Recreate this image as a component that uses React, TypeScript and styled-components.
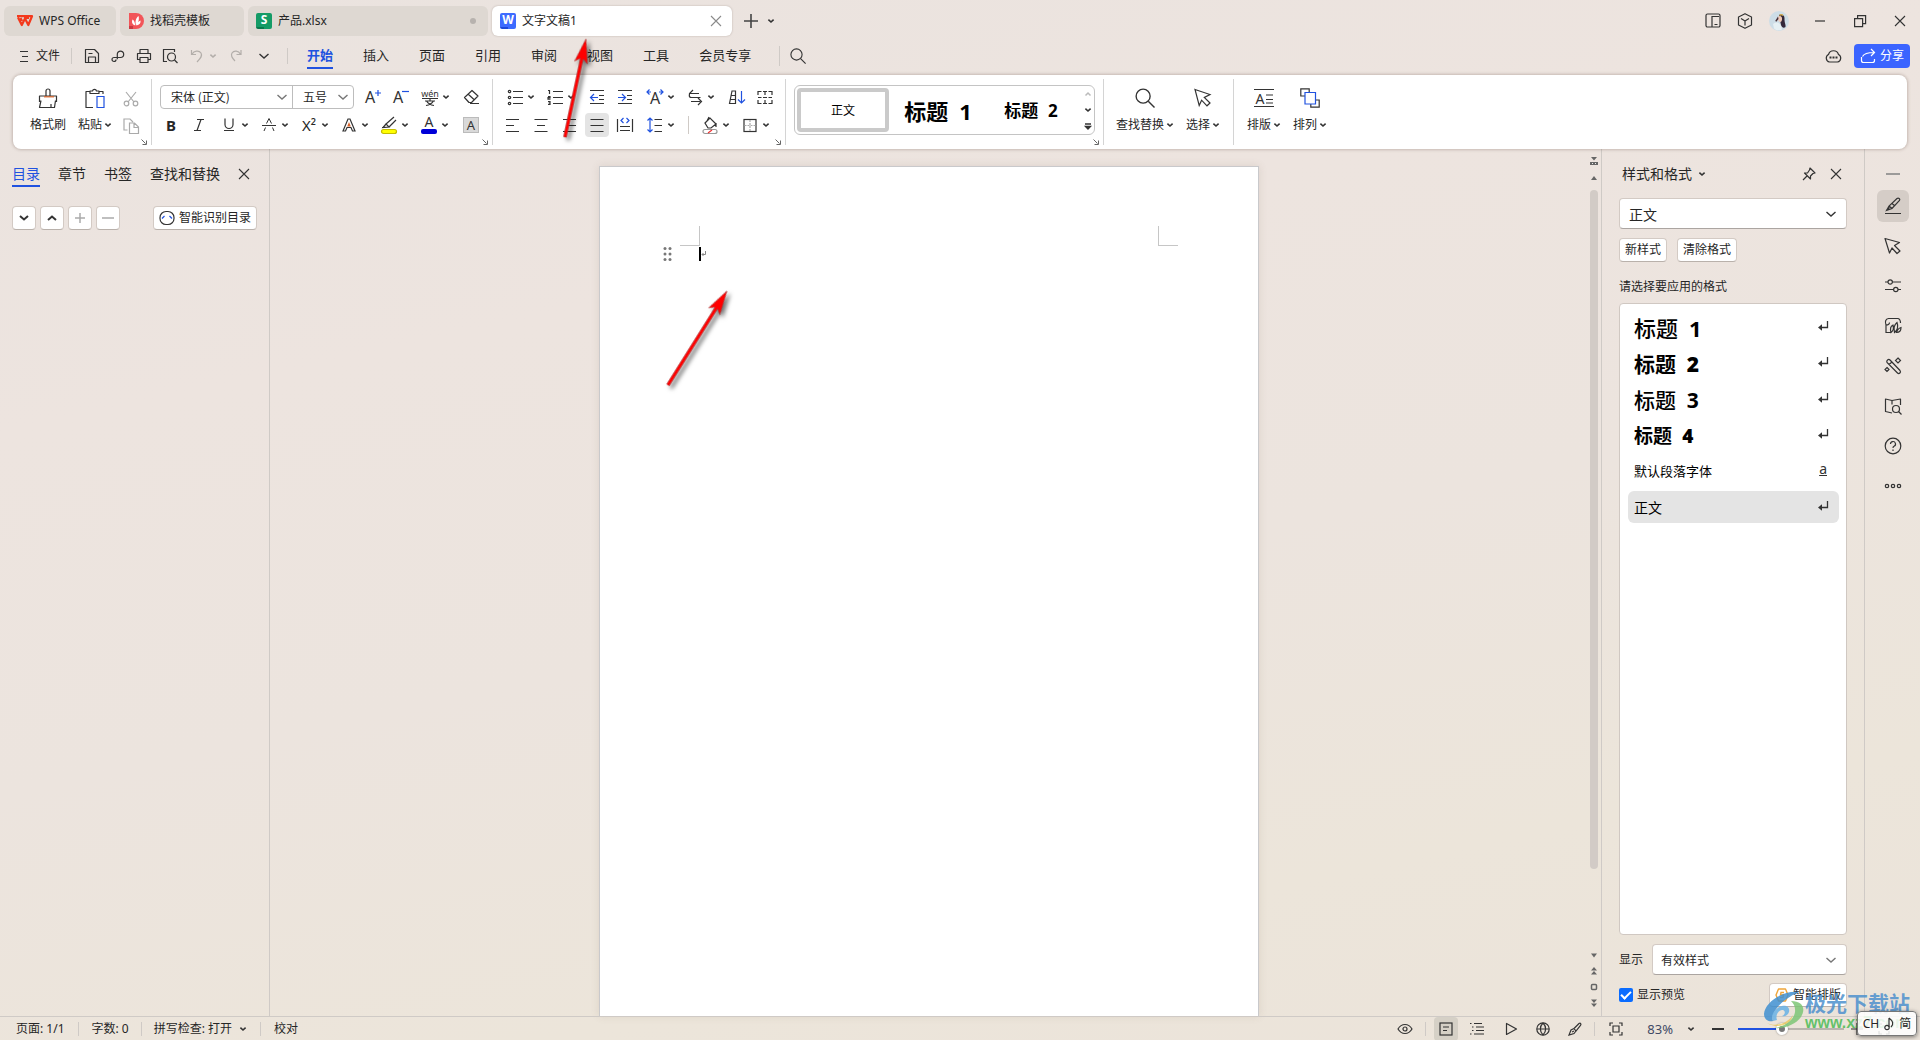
import React from 'react';
import styled, { createGlobalStyle, css } from 'styled-components';

const ui = '"Noto Sans", "Noto Sans CJK SC", sans-serif';
const cjk = '"Noto Sans CJK SC", "Noto Sans", sans-serif';
const ink = '#333333';
const blue = '#2052e0';
const line = '#cfcac6';

const Global = createGlobalStyle`
  * { box-sizing: border-box; }
  body { margin: 0; font-family: ${ui}; font-size: 12px; line-height: 20px; color: #262626; }
  button, select, input { font: inherit; color: inherit; margin: 0; }
  button { border: 0; background: none; padding: 0; cursor: pointer; white-space: nowrap; }
  svg { display: block; flex: none; overflow: visible; }
`;

/* ---------- icon helpers ---------- */

type SvgProps = { w?: number; h?: number; c?: string; s?: number; children: React.ReactNode };
const Svg = ({ w = 20, h = 20, c = ink, s = 1.2, children }: SvgProps) => (
  <svg width={w} height={h} viewBox={`0 0 ${w} ${h}`} fill="none" stroke={c} strokeWidth={s} aria-hidden="true">
    {children}
  </svg>
);
const Caret = ({ c = ink }: { c?: string }) => (
  <Svg w={8} h={8} c={c} s={1.6}><path d="M1.4 2.6 4 5l2.6-2.4" /></Svg>
);
const Chevron = ({ c = ink }: { c?: string }) => (
  <Svg w={12} h={12} c={c} s={1.4}><path d="M1.5 4 6 8l4.5-4" /></Svg>
);
const Cross = ({ c = ink }: { c?: string }) => (
  <Svg w={12} h={12} c={c} s={1.1}><path d="M1 1l10 10M11 1 1 11" /></Svg>
);
const Letter = ({ x, y, size, children }: { x: number; y: number; size: number; children: string }) => (
  <text x={x} y={y} fontSize={size} fill={ink} stroke="none" textAnchor="middle" fontFamily={ui}>{children}</text>
);
const PointerIcon = () => (
  <Svg><path d="M2 1.5 17 6.5 11.3 9.5 17 15 14 17.800 8.600 12.200 6.200 17.500z" /></Svg>
);
const SearchIcon = ({ size = 16 }: { size?: number }) => (
  <svg width={size} height={size} viewBox="0 0 16 16" fill="none" stroke={ink} strokeWidth="1.1" aria-hidden="true">
    <circle cx="6.5" cy="6.5" r="5.6" /><path d="m10.6 10.6 5 5" />
  </svg>
);
const ReturnIcon = () => (
  <Svg w={12} h={12} s={1.3}><path d="M10.5 0v6.500H3" /><path d="M5 3.300v6.400L1 6.500z" fill={ink} stroke="none" /></Svg>
);

/* ---------- shell ---------- */

const Shell = styled.div`
  position: relative;
  display: flex;
  flex-direction: column;
  height: 100vh;
  overflow: hidden;
  background: linear-gradient(168deg, #eae3df 0%, #ede4df 30%, #ece4de 55%, #ece5da 80%, #ebe3da 100%);
`;
const Rule = styled.span<{ $m?: number; $h?: number }>`
  width: 1px;
  height: ${p => p.$h ?? 16}px;
  margin: 0 ${p => p.$m ?? 12}px;
  background: ${line};
`;
const Spacer = styled.div`flex: 1;`;
const IconButton = styled.button<{ $w?: number }>`
  display: flex;
  align-items: center;
  justify-content: center;
  width: ${p => p.$w ?? 26}px;
  height: 24px;
`;

/* ---------- title bar ---------- */

const TitleBar = styled.header`
  display: flex;
  align-items: center;
  height: 36px;
  padding: 6px 0 0 4px;
  gap: 4px;
`;
const DocTab = styled.button<{ $w: number; $active?: boolean; $pad?: number }>`
  display: flex;
  align-items: center;
  gap: 6px;
  width: ${p => p.$w}px;
  height: 30px;
  padding: 0 ${p => (p.$active ? 10 : 12)}px 0 ${p => p.$pad ?? 8}px;
  border-radius: 6px;
  background: ${p => (p.$active ? '#fff' : '#ded8d2')};
  box-shadow: ${p => (p.$active ? '0 0 2px rgba(90, 70, 60, .35)' : 'none')};
`;
const TabText = styled.span`flex: 1; text-align: left;`;
const Dot = styled.i`width: 6px; height: 6px; border-radius: 50%; background: #b7b2ae;`;
const AppBadge = styled.span<{ $bg: string; $dark: string }>`
  width: 16px;
  height: 16px;
  border-radius: 2px;
  background: linear-gradient(90deg, ${p => p.$dark} 50%, transparent 50%) bottom / 100% 2px no-repeat, ${p => p.$bg};
  color: #fff;
  font-size: 12px;
  font-weight: 700;
  line-height: 14px;
  text-align: center;
`;
const WindowTools = styled.div`
  display: flex;
  align-items: center;
`;

/* ---------- menu bar ---------- */

const MenuBar = styled.nav`
  display: flex;
  align-items: center;
  height: 39px;
  padding: 0 10px 0 18px;
`;
const FileButton = styled.button`display: flex; align-items: center; gap: 6px;`;
const MenuTabs = styled.div`
  display: flex;
  gap: 30px;
  padding: 0 18px 0 7px;
`;
const MenuTab = styled.button<{ $active?: boolean }>`
  height: 27px;
  border-bottom: 2px solid ${p => (p.$active ? blue : 'transparent')};
  color: ${p => (p.$active ? blue : 'inherit')};
  font-size: 13px;
  font-weight: ${p => (p.$active ? 700 : 400)};
`;
const ShareButton = styled.button`
  display: flex;
  align-items: center;
  gap: 4px;
  height: 24px;
  padding: 0 6px;
  border-radius: 4px;
  background: #3b64ff;
  color: #fff;
`;

/* ---------- ribbon ---------- */

const Ribbon = styled.section`
  position: relative;
  z-index: 1;
  display: flex;
  height: 74px;
  margin: 0 13px;
  border-radius: 8px;
  background: #fff;
  box-shadow: 0 0 3px 1px rgba(110, 85, 75, .3);
`;
const Group = styled.div<{ $pad: string }>`
  position: relative;
  display: flex;
  padding: ${p => p.$pad};
  &:not(:first-child)::before {
    content: '';
    position: absolute;
    left: 0;
    top: 4px;
    bottom: 4px;
    width: 1px;
    background: #d4d4d4;
  }
`;
const Launcher = styled.button`
  position: absolute;
  right: 4px;
  bottom: 4px;
`;
const Stack = styled.div`display: flex; flex-direction: column;`;
const Row = styled.div<{ $pl?: number }>`
  display: flex;
  align-items: center;
  gap: 2px;
  height: 28px;
  padding-left: ${p => p.$pl ?? 0}px;
`;
const Cluster = styled.div`display: flex; align-items: center;`;
const ToolButton = styled.button<{ $split?: boolean; $on?: boolean }>`
  display: flex;
  align-items: center;
  width: ${p => (p.$split ? 40 : 28)}px;
  height: 24px;
  padding-left: 2px;
  ${p => p.$on && css`
    width: 24px;
    margin: 0 2px;
    padding: 0;
    border-radius: 4px;
    background: #e4e4e4;
  `}
`;
const Glyph = styled.span`
  display: flex;
  justify-content: center;
  width: 24px;
  font-size: 15px;
`;
const Tool = ({ label, split, on, children }: { label: string; split?: boolean; on?: boolean; children: React.ReactNode }) => (
  <ToolButton aria-label={label} title={label} $split={split} $on={on}>
    <Glyph>{children}</Glyph>
    {split && <Caret />}
  </ToolButton>
);
const BigTool = styled.button<{ $w: number }>`
  display: flex;
  flex-direction: column;
  align-items: center;
  gap: 7px;
  width: ${p => p.$w}px;
`;
const BigLabel = styled.span`display: flex; align-items: center; gap: 2px;`;

const SelectWrap = styled.span<{ $w?: number }>`
  position: relative;
  display: flex;
  align-items: center;
  ${p => (p.$w ? `width: ${p.$w}px;` : 'flex: 1;')}
  & > svg { position: absolute; right: 9px; pointer-events: none; }
`;
const BareSelect = styled.select<{ $size?: number; $pl?: number }>`
  appearance: none;
  width: 100%;
  height: 100%;
  border: 0;
  padding: 0 20px 0 ${p => p.$pl ?? 10}px;
  background: transparent;
  font-family: ${cjk};
  font-size: ${p => p.$size ?? 12}px;
  outline: none;
`;
const FontBox = styled.div`
  display: flex;
  width: 194px;
  height: 24px;
  margin-right: 2px;
  border: 1px solid #bdbdbd;
  border-radius: 4px;
  & > * + * { border-left: 1px solid #bdbdbd; }
  & svg { right: 4px; }
`;
const Gallery = styled.div`
  display: flex;
  align-items: center;
  width: 301px;
  height: 50px;
  padding: 0 2px;
  border: 1px solid #c4c4c4;
  border-radius: 6px;
`;
const GalleryItem = styled.button<{ $w: number; $size: number; $on?: boolean }>`
  width: ${p => p.$w}px;
  height: 44px;
  border: 4px solid ${p => (p.$on ? '#cacaca' : 'transparent')};
  border-radius: 4px;
  color: #000;
  font-family: ${cjk};
  font-size: ${p => p.$size}px;
  font-weight: ${p => (p.$on ? 400 : 700)};
`;
const Num = styled.span`padding-left: 6px; font-family: "Open Sans", sans-serif;`;
const GalleryNav = styled.div`
  display: flex;
  flex-direction: column;
  gap: 9px;
  margin-left: auto;
`;

/* ---------- workspace ---------- */

const Workspace = styled.main`
  display: flex;
  flex: 1;
  min-height: 0;
`;
const LeftPane = styled.aside`
  width: 270px;
  padding: 14px 12px 0;
  border-right: 1px solid ${line};
`;
const PaneTabs = styled.div`
  display: flex;
  align-items: flex-start;
  gap: 18px;
  height: 43px;
`;
const PaneTab = styled.button<{ $active?: boolean }>`
  height: 24px;
  border-bottom: 2px solid ${p => (p.$active ? blue : 'transparent')};
  color: ${p => (p.$active ? blue : 'inherit')};
  font-size: 14px;
`;
const PaneClose = styled.button`padding: 5px 0;`;
const PaneTools = styled.div`display: flex; gap: 4px;`;
const Chip = styled.button<{ $square?: boolean }>`
  display: flex;
  align-items: center;
  justify-content: center;
  gap: 4px;
  ${p => (p.$square ? 'width: 24px;' : 'padding: 0 5px;')}
  height: 24px;
  border: 1px solid #d3cac4;
  border-bottom-color: #b9b1ab;
  border-radius: 4px;
  background: #fff;
`;
const Canvas = styled.div`
  display: flex;
  flex: 1;
  justify-content: center;
  min-width: 0;
  padding-top: 17px;
`;
const Sheet = styled.article`
  width: 660px;
  padding-top: 59px;
  border: 1px solid #c9c9cb;
  border-bottom: 0;
  background: #fff;
  box-shadow: 0 0 8px rgba(120, 100, 80, .15);
`;
const Margins = styled.div`
  display: flex;
  justify-content: space-between;
  padding: 0 80px;
`;
const Corner = styled.i<{ $right?: boolean }>`
  width: 20px;
  height: 20px;
  border: 0 solid #c6c6c6;
  border-bottom-width: 1px;
  ${p => (p.$right ? 'border-left-width: 1px;' : 'border-right-width: 1px;')}
`;
const Paragraph = styled.div`
  display: flex;
  align-items: center;
  padding-left: 62px;
  height: 16px;
`;
const TextCursor = styled.i`width: 2px; height: 14px; margin-left: 25px; background: #000;`;
const ScrollRail = styled.div`
  display: flex;
  flex-direction: column;
  align-items: center;
  width: 15px;
  padding: 8px 0 9px;
  border-right: 1px solid ${line};
`;
const ScrollTop = styled.div`
  display: flex;
  flex-direction: column;
  gap: 9px;
  height: 33px;
`;
const ScrollTrack = styled.div`flex: 1; padding-bottom: 82px;`;
const ScrollThumb = styled.div`
  width: 8px;
  height: 100%;
  border-radius: 4px;
  background: #d2cbc6;
`;
const ScrollBottom = styled.div`display: flex; flex-direction: column; gap: 8px;`;

/* ---------- styles pane ---------- */

const StylesPane = styled.aside`
  display: flex;
  flex-direction: column;
  width: 263px;
  padding: 11px 17px 9px 17px;
  border-right: 1px solid ${line};
`;
const PaneTitle = styled.div`
  display: flex;
  align-items: center;
  gap: 6px;
  height: 28px;
  padding: 0 5px 0 3px;
  font-size: 14px;
`;
const PaneTitleTools = styled.div`display: flex; gap: 14px; margin-left: auto; align-items: center;`;
const Field = styled.div<{ $mt?: number }>`
  display: flex;
  flex: ${p => (p.$mt ? 'none' : '1')};
  height: 31px;
  margin-top: ${p => p.$mt ?? 0}px;
  border: 1px solid #d3cac4;
  border-bottom-color: #aba5a1;
  border-radius: 4px;
  background: #fff;
`;
const ButtonRow = styled.div`display: flex; gap: 10px; margin: 9px 0 15px;`;
const StyleList = styled.ul`
  display: flex;
  flex: 1;
  flex-direction: column;
  gap: 4px;
  margin: 6px 0 0;
  padding: 7px 7px 0 8px;
  border: 1px solid #d0c8c2;
  border-radius: 4px;
  background: #fff;
  list-style: none;
`;
const StyleRow = styled.button<{ $size: number; $weight: number; $on?: boolean }>`
  display: flex;
  align-items: center;
  justify-content: space-between;
  width: 100%;
  height: 32px;
  padding: 0 10px 0 6px;
  border-radius: 6px;
  background: ${p => (p.$on ? '#e4e4e4' : 'transparent')};
  color: #000;
  font-family: ${cjk};
  font-size: ${p => p.$size}px;
  font-weight: ${p => p.$weight};
`;
const CharMark = styled.span`font: 14px/16px ${ui}; text-decoration: underline; padding: 0 2px 4px 0; color: ${ink};`;
const FooterRow = styled.div<{ $mt: number }>`
  display: flex;
  align-items: center;
  gap: 9px;
  margin-top: ${p => p.$mt}px;
`;
const CheckLabel = styled.label`
  display: flex;
  align-items: center;
  gap: 4px;
  flex: 1;
`;
const CheckBox = styled.input`
  appearance: none;
  width: 14px;
  height: 14px;
  border-radius: 2px;
  background: #0a6cff;
  display: grid;
  place-items: center;
  &:checked::after {
    content: '';
    width: 8px;
    height: 4px;
    margin-top: -2px;
    border: solid #fff;
    border-width: 0 0 2px 2px;
    rotate: -45deg;
  }
`;
const SideRail = styled.aside`
  display: flex;
  flex-direction: column;
  align-items: center;
  gap: 8px;
  width: 55px;
  padding-top: 9px;
`;
const RailButton = styled.button<{ $on?: boolean; $short?: boolean }>`
  display: flex;
  align-items: center;
  justify-content: center;
  width: 32px;
  height: ${p => (p.$short ? 24 : 32)}px;
  border-radius: 6px;
  background: ${p => (p.$on ? '#d5cdc7' : 'transparent')};
`;

/* ---------- status bar ---------- */

const StatusBar = styled.footer`
  display: flex;
  align-items: center;
  height: 24px;
  padding: 0 16px;
  border-top: 1px solid ${line};
`;
const StatusButton = styled.button`display: flex; align-items: center; gap: 7px;`;
const ViewButton = styled.button<{ $w: number; $on?: boolean }>`
  display: flex;
  align-items: center;
  justify-content: center;
  width: ${p => p.$w}px;
  height: 24px;
  border-radius: 4px;
  background: ${p => (p.$on ? '#d5d0c6' : 'transparent')};
`;
const ZoomText = styled.button`
  display: flex;
  align-items: center;
  gap: 14px;
  margin: 0 11px 0 14px;
  color: #3f4a66;
  font-size: 13px;
`;
const ZoomSlider = styled.input`
  appearance: none;
  width: 106px;
  height: 12px;
  margin: 0 6px 0 8px;
  background: linear-gradient(90deg, ${blue} 42%, #b9b4ae 42%) center / 100% 2px no-repeat;
  &::-webkit-slider-thumb {
    appearance: none;
    width: 12px;
    height: 12px;
    border: 3px solid #fff;
    border-radius: 50%;
    background: #777;
    box-shadow: 0 0 2px rgba(0, 0, 0, .4);
  }
`;

/* ---------- overlays ---------- */

const Marks = styled.svg`
  position: absolute;
  left: 0;
  top: 0;
  z-index: 2;
  pointer-events: none;
`;
const Watermark = styled.div`
  position: absolute;
  right: 10px;
  bottom: 8px;
  z-index: 3;
  display: flex;
  align-items: center;
  pointer-events: none;
`;
const WatermarkName = styled.div`
  color: rgba(77, 144, 205, .85);
  font: 700 21px/24px ${cjk};
`;
const WatermarkSite = styled.div`
  color: rgba(76, 187, 86, .85);
  font: 700 16px/18px "Liberation Sans", sans-serif;
`;
const ImeBar = styled.div`
  position: absolute;
  right: 3px;
  bottom: 4px;
  z-index: 4;
  display: flex;
  align-items: center;
  justify-content: center;
  gap: 4px;
  width: 60px;
  height: 25px;
  border: 1px solid #777;
  border-radius: 4px;
  background: rgba(255, 255, 255, .85);
  box-shadow: 0 1px 4px rgba(0, 0, 0, .5);
`;

const menuTabs = ['开始', '插入', '页面', '引用', '审阅', '视图', '工具', '会员专享'];
const paneTabs = ['目录', '章节', '书签', '查找和替换'];
const styleRows = [
  { name: '标题', n: '1', size: 22, weight: 500 },
  { name: '标题', n: '2', size: 21, weight: 700 },
  { name: '标题', n: '3', size: 21, weight: 500 },
  { name: '标题', n: '4', size: 19, weight: 700 },
  { name: '默认段落字体', size: 13, weight: 400, char: true },
  { name: '正文', size: 14, weight: 400, on: true },
];

const LaunchIcon = () => <Svg w={6} h={6} c="#666" s={1}><path d="M.5.5l4 4M5.5 1.5v4h-4" /></Svg>;

const Title = () => (
  <TitleBar>
    <DocTab $w={112} $pad={12}>
      <Svg w={17} h={12} c="#f3391c" s={2.2}><path d="M1 1.200h15L12.300 10 9 3.500 5.800 10 2 2.500M4.500 3 6 6M13 3 8 3" strokeLinejoin="round" /></Svg>
      <TabText>WPS Office</TabText>
    </DocTab>
    <DocTab $w={124}>
      <Svg w={16} h={16} c="none">
        <path d="M1 0h7a8 8 0 0 1 0 16H1z" fill="#f25559" />
        <path d="M1 13h4v3H1z" fill="#c93a42" />
        <path d="M7.2 12.5C4 11.5 3.5 9 4.5 6.5 6 7.5 7 9 7.2 12.5zM8 12.5C6.8 8.5 8 5 10.5 3c.8 2.5.5 6-2.5 9.5zM8.5 12.5C9 10 10.5 8 12.5 7.5c.5 2.500-1 4.500-4 5z" fill="#fff" />
      </Svg>
      <TabText>找稻壳模板</TabText>
    </DocTab>
    <DocTab $w={240}>
      <AppBadge $bg="#149b66" $dark="#08794c">S</AppBadge>
      <TabText>产品.xlsx</TabText>
      <Dot />
    </DocTab>
    <DocTab $w={240} $active>
      <AppBadge $bg="#3d6bff" $dark="#1c48d8">W</AppBadge>
      <TabText>文字文稿1</TabText>
      <Cross c="#8a8a8a" />
    </DocTab>
    <Cluster>
      <IconButton $w={30} aria-label="新建"><Svg w={14} h={14} c="#444" s={1.6}><path d="M7 0v14M0 7h14" /></Svg></IconButton>
      <IconButton $w={10} aria-label="标签列表"><Caret /></IconButton>
    </Cluster>
    <Spacer />
    <WindowTools>
      <IconButton $w={38} aria-label="多窗口">
        <Svg w={16} h={16}><path d="M7 14H2.5A1.5 1.5 0 0 1 1 12.5v-10A1.5 1.5 0 0 1 2.5 1h11A1.5 1.5 0 0 1 15 2.5v10a1.5 1.5 0 0 1-1.5 1.500H7V3.500h7M9.500 11.500h3" /></Svg>
      </IconButton>
      <IconButton $w={26} aria-label="应用">
        <Svg w={16} h={16}><path d="M8 .7 14.500 4v8L8 15.300 1.500 12V4zM4 5.500 8 8l4-2.500M8 8v4.500" strokeLinejoin="round" /></Svg>
      </IconButton>
      <IconButton $w={42} aria-label="账户">
        <Svg w={20} h={20} c="none">
          <circle cx="10" cy="10" r="10" fill="#cddde7" />
          <path d="M10 4c4-1.500 6 1 5.500 5 0 3 1.500 4.500 1 7-2 1.500-3.500.5-4.500-2z" fill="#33283a" />
          <path d="M9 6c2-2 4.500-.5 4 2.500S11 11.500 9.500 10z" fill="#f0c9b8" />
          <path d="M6.500 9.500 9 5.500l.5 2.500-2.500 3z" fill="#4a3038" />
          <path d="M4 13c4-3 8-1.500 9 5.500-3 1.500-6 1-8-1z" fill="#e6f0f4" />
          <path d="M10.500 4.500c1-1 2.500-1 3.500 0" stroke="#d8b04a" />
        </Svg>
      </IconButton>
      <IconButton $w={40} aria-label="最小化"><Svg w={10} h={10}><path d="M0 5h10" /></Svg></IconButton>
      <IconButton $w={40} aria-label="还原"><Svg w={12} h={12}><path d="M.6 3.600h8v8h-8zM3.600 3.600v-3h8v8h-3" /></Svg></IconButton>
      <IconButton $w={40} aria-label="关闭"><Cross /></IconButton>
    </WindowTools>
  </TitleBar>
);

const Menu = () => (
  <MenuBar>
    <FileButton>
      <Svg w={12} h={12} s={1}><path d="M2 1.500h8M4 6.500h6M2 11.500h8" /></Svg>文件
    </FileButton>
    <Rule $m={11} />
    <Cluster>
      <IconButton $w={18} aria-label="保存"><Svg w={16} h={16}><path d="M1.500 1.500h9l4 4v9h-13zM4.500 14.500V9h7v5.500M4.500 5.500h4" strokeLinejoin="round" /></Svg></IconButton>
      <IconButton $w={34} aria-label="输出"><Svg w={14} h={14}><path d="M5 10.500a2 2 0 1 1-2-2h6.500a3.200 3.200 0 1 0-3.200-3.200v5" /></Svg></IconButton>
      <IconButton $w={18} aria-label="打印"><Svg w={16} h={16}><path d="M4 5.500v-4h8v4M4 11.500H1.500v-6h13v6H12M4 9.500h8v5H4z" strokeLinejoin="round" /></Svg></IconButton>
      <IconButton $w={34} aria-label="打印预览"><Svg w={16} h={16}><path d="M5 13.500H1.500v-12h11V4" /><circle cx="9.5" cy="9" r="4" /><path d="m12.500 12 3 3" /></Svg></IconButton>
      <IconButton $w={20} aria-label="撤销"><Svg w={14} h={14} c="#b3aeaa"><path d="M1.500 1v4.500H6M2 5.200C4 1.500 9 1 11 4c1.600 2.700 0 5-4 9" /></Svg></IconButton>
      <IconButton $w={12} aria-label="撤销列表"><Caret c="#b3aeaa" /></IconButton>
      <IconButton $w={34} aria-label="恢复"><Svg w={12} h={14} c="#b3aeaa"><path d="M11 1v4.500H6.500M10.500 5.200C8.500 1.500 4 1 2 4c-1.600 2.700 0 5 3 8" /></Svg></IconButton>
      <IconButton $w={22} aria-label="更多"><Chevron /></IconButton>
    </Cluster>
    <Rule />
    <MenuTabs>
      {menuTabs.map((t, i) => <MenuTab key={t} $active={i === 0}>{t}</MenuTab>)}
    </MenuTabs>
    <Rule $m={10} $h={20} />
    <button aria-label="搜索"><SearchIcon /></button>
    <Spacer />
    <IconButton $w={40} aria-label="云">
      <Svg w={17} h={14}><path d="M4.500 13a4 4 0 0 1-1-7.500 5.200 5.200 0 0 1 10 0 4 4 0 0 1-1 7.500z" /><path d="M4.500 8.500h2M7.500 8.500h2M10.500 8.500h2" strokeWidth="2" /></Svg>
    </IconButton>
    <ShareButton>
      <Svg w={16} h={16} c="#fff"><path d="M1.500 9v3.500a2 2 0 0 0 2 2h9a2 2 0 0 0 2-2V11M2.500 8.500C4 5.500 7 4.500 14 4.500M11 1l3.500 3.500L11 8" /></Svg>
      分享
    </ShareButton>
  </MenuBar>
);

const RibbonBar = () => (
  <Ribbon>
    <Group $pad="13px 8px 0 12px">
      <BigTool $w={46}>
        <Svg><path d="M8 8V3a2 2 0 0 1 4 0v5M1.500 14V8h17v6M3 12.500 1.500 19.500h15l1-7M13 16v3.500" strokeLinejoin="round" /><path d="M6 8.800h10" stroke="#d8632a" /></Svg>
        <BigLabel>格式刷</BigLabel>
      </BigTool>
      <BigTool $w={48}>
        <Svg><path d="M5 3.500H1v16h7M14 3.500h4V6M5 5.500V3h2.500C8 .8 11 .8 11.500 3H14v2.500z" strokeLinejoin="round" /><path d="M12 8.500h7v11h-7z" stroke={blue} /></Svg>
        <BigLabel>粘贴<Caret /></BigLabel>
      </BigTool>
      <Stack>
        <IconButton $w={24} aria-label="剪切"><Svg w={16} h={16} c="#aaa"><path d="M3 0l8 10M13 0 5 10" /><circle cx="3.5" cy="11.500" r="2.300" /><circle cx="12.5" cy="11.500" r="2.300" /></Svg></IconButton>
        <Row><IconButton $w={24} aria-label="复制"><Svg w={16} h={16} c="#aaa"><path d="M4.500 12H1V1h6l3 3M6.500 5h5l4 4v6.500h-9zM11 5v4.500h4" /></Svg></IconButton></Row>
      </Stack>
      <Launcher aria-label="剪贴板选项"><LaunchIcon /></Launcher>
    </Group>

    <Group $pad="8px 6px 0 6px">
      <Stack>
        <Row $pl={3}>
          <FontBox>
            <SelectWrap $w={131}><BareSelect aria-label="字体"><option>宋体 (正文)</option></BareSelect><Chevron c="#777" /></SelectWrap>
            <SelectWrap><BareSelect aria-label="字号"><option>五号</option></BareSelect><Chevron c="#777" /></SelectWrap>
          </FontBox>
          <Cluster>
            <Tool label="增大字号"><Svg><Letter x={8} y={16} size={16}>A</Letter><path d="M13 6h6M16 3v6" stroke={blue} /></Svg></Tool>
            <Tool label="减小字号"><Svg><Letter x={8} y={16} size={16}>A</Letter><path d="M12 4.500h7" stroke={blue} /></Svg></Tool>
          </Cluster>
          <Tool label="拼音指南" split><Svg><Letter x={10} y={10} size={9}>wén</Letter><path d="M2 11.500h16M5 14h10M10 12v2M6.500 14c1.500 2.500 4 4 7.500 4.500M13.500 14c-1.500 2.500-4 4-7.500 4.500" /></Svg></Tool>
          <Tool label="清除格式"><Svg><path d="M2.500 10.500 10 3.500l6 5.500-6.500 6.500H7zM6 7l6.500 6M8 16.500h9" strokeLinejoin="round" /></Svg></Tool>
        </Row>
        <Row>
          <Cluster>
            <Tool label="加粗"><b>B</b></Tool>
            <Tool label="倾斜"><Svg><path d="M8 4.500h7M5 15.500h7M12 4.500 8 15.500" /></Svg></Tool>
          </Cluster>
          <Cluster>
            <Tool label="下划线" split><Svg><path d="M6 3.500v6a4 4 0 0 0 8 0v-6M5 15.500h10" /></Svg></Tool>
            <Tool label="删除线" split><Svg s={1}><path d="M3 10.500h14M7.500 8.500 10 3.500l2.500 5M6.500 12.500 5 16M13.500 12.500 15 16" /></Svg></Tool>
            <Tool label="上标" split><span>X²</span></Tool>
            <Tool label="文字效果" split><Svg><path d="M4 16 9 4h2l5 12h-2.500L12 12.500H8L6.500 16z" /><path d="m10 7 1.800 4.500H8.200z" fill="#d8632a" stroke="none" /></Svg></Tool>
            <Tool label="突出显示" split><Svg><path d="m7 9 8-7M10 12l7-7M7 9l3 3-6 .5zM3 12.500h3" /><rect x="2.5" y="14.500" width="15" height="4" rx="2" fill="#ff0" stroke="#c5bd00" /></Svg></Tool>
            <Tool label="字体颜色" split><Svg><Letter x={10} y={12} size={14}>A</Letter><rect x="2" y="14" width="16" height="5" rx="2" fill="#0000d8" stroke="none" /></Svg></Tool>
          </Cluster>
          <Tool label="字符底纹"><Svg c="#bbb" s={1}><rect x="2.5" y="2.500" width="15" height="15" fill="#d9d9d9" /><Letter x={10} y={15} size={13}>A</Letter></Svg></Tool>
        </Row>
      </Stack>
      <Launcher aria-label="字体选项"><LaunchIcon /></Launcher>
    </Group>

    <Group $pad="8px 6px 0 7px">
      <Stack>
        <Row $pl={2}>
          <Cluster>
            <Tool label="项目符号" split><Svg><path d="M8 4.500h10M8 10.500h10M8 16.500h10" /><circle cx="4.5" cy="4.500" r="1.200" /><circle cx="4.5" cy="10.500" r="1.200" /><circle cx="4.5" cy="16.500" r="1.200" /></Svg></Tool>
            <Tool label="编号" split><Svg><path d="M8 4.500h10M8 10.500h10M8 16.500h10M3 3.500h1.500v3.500M3 9.500h2v1.200H3v1.500h2.500M3 14.500h2v3H3M3.500 16H5" /></Svg></Tool>
          </Cluster>
          <Cluster>
            <Tool label="减少缩进"><Svg><path d="M3 3.500h14M12 8.500h5M12 12.500h5M3 16.500h14" /><path d="M3.500 10.500H11M7 7l-3.500 3.500L7 14" stroke={blue} /></Svg></Tool>
            <Tool label="增加缩进"><Svg><path d="M3 3.500h14M12 8.500h5M12 12.500h5M3 16.500h14" /><path d="M3 10.500h7.500M7 7l3.500 3.500L7 14" stroke={blue} /></Svg></Tool>
          </Cluster>
          <Cluster>
            <Tool label="中文版式" split><Svg><Letter x={10} y={17} size={16}>A</Letter><path d="M6 5H2.500M4.500 2.500 2 5l2.500 2.500M14 5h3.500M15.500 2.500 18 5l-2.500 2.500" stroke={blue} /></Svg></Tool>
            <Tool label="文字方向" split><Svg><path d="M14 6.500H4.500M8 3 4.500 6.500c-.5 3 0 4 2 4h9M6 14.500h9.500M13 11l3.500 3.500L13 18" /></Svg></Tool>
          </Cluster>
          <Cluster>
            <Tool label="排序"><Svg><path d="M2.500 16.500 5 4h3.500v12.500zM4 8.500h4.500M3.500 12.500h5" /><path d="M14.500 4v12M11 12.500l3.500 3.500 3.500-3.500" stroke={blue} /></Svg></Tool>
            <Tool label="表格"><Svg><path d="M3 8V4.500h3.500M8 4.500h4M13.500 4.500H17V8M3 10.500h3.500M8 10.500h4M13.500 10.500H17M3 13v3.500h3.500M8 16.500h4M13.500 16.500H17V13M10 4.500V8M10 13v3.500" /></Svg></Tool>
          </Cluster>
        </Row>
        <Row>
          <Cluster>
            <Tool label="左对齐"><Svg><path d="M3 4.500h13M3 10.500h8M3 16.500h13" /></Svg></Tool>
            <Tool label="居中"><Svg><path d="M3.500 4.500h13M6 10.500h8M3.500 16.500h13" /></Svg></Tool>
            <Tool label="右对齐"><Svg><path d="M4 4.500h13M9 10.500h8M4 16.500h13" /></Svg></Tool>
            <Tool label="两端对齐" on><Svg><path d="M3.500 4.500h13M3.500 10.500h13M3.500 16.500h13" /></Svg></Tool>
            <Tool label="分散对齐"><Svg><path d="M2.500 4v13M17.500 4v13M5 11.500h10M5 15.500h10" /><path d="M8.500 3 6 5.500 8.500 8M11.500 3 14 5.500 11.500 8" stroke={blue} /></Svg></Tool>
          </Cluster>
          <Tool label="行距" split><Svg><path d="M9.500 4.500H17M9.500 10.500H17M9.500 16.500H17" /><path d="M5 3v14M2.500 5.500 5 3l2.500 2.500M2.500 14.500 5 17l2.500-2.500" stroke={blue} /></Svg></Tool>
          <Rule $m={5} $h={18} />
          <Cluster>
            <Tool label="底纹" split><Svg><path d="m5 8 5-5 6 6-5 4H8zM7 6l2-4M16 8v4" /><rect x="3" y="14.500" width="14" height="4" rx="2" stroke="#999" /><path d="m8 18 4-3" stroke="#e33" /></Svg></Tool>
            <Tool label="边框" split><Svg><rect x="4" y="4.500" width="12" height="12" /><path d="M10 5v11M4.500 10.500h11" stroke="#aaa" strokeDasharray="2 1" /></Svg></Tool>
          </Cluster>
        </Row>
      </Stack>
      <Launcher aria-label="段落选项"><LaunchIcon /></Launcher>
    </Group>

    <Group $pad="10px 8px 0 9px">
      <Gallery>
        <GalleryItem $w={92} $size={12} $on>正文</GalleryItem>
        <GalleryItem $w={98} $size={22}>标题 <Num>1</Num></GalleryItem>
        <GalleryItem $w={88} $size={17}>标题 <Num>2</Num></GalleryItem>
        <GalleryNav>
          <button aria-label="上一行"><Svg w={8} h={6} c="#bbb" s={1.5}><path d="M1.500 4.500 4 2l2.500 2.500" /></Svg></button>
          <button aria-label="下一行"><Caret /></button>
          <button aria-label="全部样式"><Svg w={8} h={7} s={1.3}><path d="M1 1h6M1.500 3.500 4 6l2.500-2.500z" fill={ink} /></Svg></button>
        </GalleryNav>
      </Gallery>
      <Launcher aria-label="样式选项"><LaunchIcon /></Launcher>
    </Group>

    <Group $pad="13px 7px 0 7px">
      <BigTool $w={70}><SearchIcon size={20} /><BigLabel>查找替换<Caret /></BigLabel></BigTool>
      <BigTool $w={46}><PointerIcon /><BigLabel>选择<Caret /></BigLabel></BigTool>
    </Group>
    <Group $pad="13px 8px 0 8px">
      <BigTool $w={46}><Svg><path d="M0 1.500h20M12 7h7M12 11.500h7M12 15h7M0 18.500h20" /><Letter x={6} y={15.5} size={14}>A</Letter></Svg><BigLabel>排版<Caret /></BigLabel></BigTool>
      <BigTool $w={46}><Svg><path d="M5 8H.8V.8h8.400V4M15.500 12h3.700v7.200h-8.400V16" /><path d="M5 4.500h10.500V16H5z" stroke={blue} /></Svg><BigLabel>排列<Caret /></BigLabel></BigTool>
    </Group>
  </Ribbon>
);

const Outline = () => (
  <LeftPane>
    <PaneTabs>
      {paneTabs.map((t, i) => <PaneTab key={t} $active={i === 0}>{t}</PaneTab>)}
      <PaneClose aria-label="关闭"><Cross /></PaneClose>
    </PaneTabs>
    <PaneTools>
      <Chip $square aria-label="展开"><Svg w={12} h={12} s={2}><path d="M2 4l4 3.500L10 4" /></Svg></Chip>
      <Chip $square aria-label="收起"><Svg w={12} h={12} s={2}><path d="M2 8l4-3.500L10 8" /></Svg></Chip>
      <Chip $square aria-label="增加"><Svg w={12} h={12} c="#aaa" s={1.5}><path d="M6 1v10M1 6h10" /></Svg></Chip>
      <Chip $square aria-label="减少"><Svg w={12} h={12} c="#aaa" s={1.5}><path d="M0 6h12" /></Svg></Chip>
      <Spacer />
      <Chip>
        <Svg w={16} h={16}><rect x="1" y="1.500" width="14" height="13" rx="6" /><path d="M3 8.500 5.500 6M13 8.500 10.500 6" stroke={blue} /></Svg>
        智能识别目录
      </Chip>
    </PaneTools>
  </LeftPane>
);

const Document = () => (
  <Canvas>
    <Sheet>
      <Margins><Corner /><Corner $right /></Margins>
      <Paragraph>
        <Svg w={12} h={14} c="none">
          {[1.5, 7, 12.5].map(y => [3, 8].map(x => <circle key={`${x}-${y}`} cx={x} cy={y} r="1.5" fill="#777" />))}
        </Svg>
        <TextCursor />
        <Svg w={5} h={8} c="#888" s={1}><path d="M4.500 1v3.500H1M2.500 3 1 4.500 2.500 6" /></Svg>
      </Paragraph>
    </Sheet>
  </Canvas>
);

const Scroller = () => (
  <ScrollRail>
    <ScrollTop>
      <Svg w={8} h={9} c="none"><path d="M1 0h6L4 3.500zM0 5h8v3H0z" fill="#666" /><path d="M2 6.500h1M5 6.500h1" stroke="#eee" /></Svg>
      <Svg w={8} h={6} c="none"><path d="M4 1l3 4H1z" fill="#666" /></Svg>
    </ScrollTop>
    <ScrollTrack><ScrollThumb /></ScrollTrack>
    <ScrollBottom>
      <Svg w={8} h={8} c="none"><path d="M4 6.500l3-4H1z" fill="#666" /></Svg>
      <Svg w={8} h={8} c="none"><path d="M4 0l3 3.500H1zM4 4l3 3.500H1z" fill="#666" /></Svg>
      <Svg w={8} h={8} c="#666" s={1.5}><rect x="1.5" y="1.500" width="5" height="5" rx="1" /></Svg>
      <Svg w={8} h={8} c="none"><path d="M4 4l3-3.500H1zM4 8l3-3.500H1z" fill="#666" /></Svg>
    </ScrollBottom>
  </ScrollRail>
);

const Formats = () => (
  <StylesPane>
    <PaneTitle>
      样式和格式 <Caret />
      <PaneTitleTools>
        <button aria-label="固定"><Svg w={14} h={14}><path d="M8 1l5 5-2 .5-2.500 2.500v3L2.500 6h3L7.500 3zM5 9l-4 4" strokeLinejoin="round" /></Svg></button>
        <button aria-label="关闭"><Cross /></button>
      </PaneTitleTools>
    </PaneTitle>
    <Field $mt={10}>
      <SelectWrap><BareSelect aria-label="当前样式" $size={14} $pl={9}><option>正文</option></BareSelect><Chevron /></SelectWrap>
    </Field>
    <ButtonRow><Chip>新样式</Chip><Chip>清除格式</Chip></ButtonRow>
    <span>请选择要应用的格式</span>
    <StyleList>
      {styleRows.map(r => (
        <li key={r.name + (r.n ?? '')}>
          <StyleRow $size={r.size} $weight={r.weight} $on={r.on}>
            <span>{r.name}{r.n && <> <Num><b>{r.n}</b></Num></>}</span>
            {r.char ? <CharMark>a</CharMark> : <ReturnIcon />}
          </StyleRow>
        </li>
      ))}
    </StyleList>
    <FooterRow $mt={9}>
      <label htmlFor="show-styles">显示</label>
      <Field>
        <SelectWrap><BareSelect id="show-styles" $pl={8}><option>有效样式</option></BareSelect><Chevron c="#777" /></SelectWrap>
      </Field>
    </FooterRow>
    <FooterRow $mt={8}>
      <CheckLabel><CheckBox type="checkbox" defaultChecked />显示预览</CheckLabel>
      <Chip>
        <Svg w={14} h={14} c="#efa53a" s={1.4}><path d="M3.500 1h7L13 7l-2.500 6h-7L1 7z" strokeLinejoin="round" /><path d="M9 4.500H6L5.500 7h3L8 9.500H5" /></Svg>
        智能排版
      </Chip>
    </FooterRow>
  </StylesPane>
);

const Rail = () => (
  <SideRail>
    <RailButton $short aria-label="折叠"><Svg w={14} h={24} c="#888" s={1.6}><path d="M0 16h14" /></Svg></RailButton>
    <RailButton $on aria-label="样式和格式"><Svg w={18} h={18}><path d="M1 16.500h16M2.500 13.500 5 9l8-7.500c1.500-1 3.500.5 2.500 2L8 11.500zM5 9l3 2.500M8 6.500l3 2.500M2.500 13.500l3-3" /></Svg></RailButton>
    <RailButton aria-label="选择"><Svg w={18} h={18}><path d="M1 1.500 15.500 5.500 10.500 8.500 16 14l-3 2.500-5-5.500-2.500 5z" strokeLinejoin="round" /></Svg></RailButton>
    <RailButton aria-label="设置"><Svg w={18} h={18}><path d="M1 5h3M8.500 5H17M1 12.500h8.500M14 12.500h3" /><circle cx="6.2" cy="5" r="2.200" /><circle cx="11.8" cy="12.500" r="2.200" /></Svg></RailButton>
    <RailButton aria-label="图库"><Svg w={18} h={18}><path d="M7 15.500H2V8C.5 4 2 2 4.500 1.500H14C16 2 16.500 4 16.500 6M2 8c2.500 0 3.500-1 3.500-2.500M7 15.500C6 12 7 9 9 8c1 3 0 6-2 7.500zM10.500 15.500C9.500 11 11 7 13 5.500c1.500 4 .5 7.500-2.500 10zM12.500 15.500c1-3 2.500-4.500 4.500-5 0 3-1.500 5-4.500 5z" /></Svg></RailButton>
    <RailButton aria-label="美化"><Svg w={18} h={18}><path d="M3 5.500C2 3.500 4.500 1.500 6 3l10 10.500c1.500 2-1 4-2.500 2.500zM5 7.500l3-2.500" /><path d="M14 1l2.500 2.500L14 6l-2.500-2.500zM3 10.500l2 2-2 2-2-2z" /></Svg></RailButton>
    <RailButton aria-label="查阅"><Svg w={18} h={18}><path d="M8 16 1.500 14.500V2L8 3.500 16.500 2v6M8 3.500v4" strokeLinejoin="round" /><circle cx="12" cy="12" r="3.500" /><path d="m14.500 14.500 3 3" /></Svg></RailButton>
    <RailButton aria-label="帮助"><Svg w={18} h={18}><circle cx="9" cy="9" r="7.800" /><path d="M6.500 7a2.500 2.500 0 1 1 3.500 2.300c-.7.300-1 .7-1 1.700M9 12.500V14" /></Svg></RailButton>
    <RailButton aria-label="更多"><Svg w={18} h={18}><circle cx="3" cy="9" r="1.700" /><circle cx="9" cy="9" r="1.700" /><circle cx="15" cy="9" r="1.700" /></Svg></RailButton>
  </SideRail>
);

const Status = () => (
  <StatusBar>
    <StatusButton>页面: 1/1</StatusButton><Rule $h={14} $m={13} />
    <StatusButton>字数: 0</StatusButton><Rule $h={14} />
    <StatusButton>拼写检查: 打开 <Caret /></StatusButton><Rule $h={14} $m={13} />
    <StatusButton>校对</StatusButton>
    <Spacer />
    <ViewButton $w={24} aria-label="护眼模式"><Svg w={16} h={16}><path d="M1 8c3.500-6 10.500-6 14 0-3.500 6-10.500 6-14 0z" /><circle cx="8" cy="8" r="2" /></Svg></ViewButton>
    <Rule $m={8} $h={14} />
    <ViewButton $w={24} $on aria-label="页面视图"><Svg w={14} h={14}><rect x="1" y="1" width="12" height="12" /><path d="M4 5h6M4 8.500h4" /></Svg></ViewButton>
    <ViewButton $w={38} aria-label="大纲视图"><Svg w={14} h={14}><path d="M0 1.500h1.500M4 1.500h8M2 5h1.500M6 5h8M2 8.500h1.500M6 8.500h8M0 12h1.500M4 12h10" /></Svg></ViewButton>
    <ViewButton $w={30} aria-label="阅读视图"><Svg w={14} h={14}><path d="M2.500 1.500v11L12.500 7z" strokeLinejoin="round" /></Svg></ViewButton>
    <ViewButton $w={34} aria-label="网页视图"><Svg w={14} h={14}><circle cx="7" cy="7" r="6.200" /><path d="M1 7h12M7 1c-3.500 3.500-3.500 8.500 0 12M7 1c3.500 3.500 3.500 8.500 0 12" /></Svg></ViewButton>
    <ViewButton $w={30} aria-label="书写模式"><Svg w={14} h={14}><path d="M6 6.500 11 1.500c1.500-1 2.500.5 1.500 1.800L8 9zM6 6.500 3 8l-2 5 5-1.500L8 9M4 10l2-1" /></Svg></ViewButton>
    <Rule $m={4} $h={14} />
    <ViewButton $w={34} aria-label="最佳显示比例"><Svg w={14} h={14}><path d="M1 4V1h3M10 1h3v3M1 10v3h3M10 13h3v-3M4 4h6v6H4z" /></Svg></ViewButton>
    <ZoomText>83% <Caret /></ZoomText>
    <IconButton $w={24} aria-label="缩小"><Svg w={12} h={12} s={2}><path d="M0 6h12" /></Svg></IconButton>
    <ZoomSlider type="range" aria-label="显示比例" min={0} max={100} defaultValue={40} />
    <IconButton $w={14} aria-label="放大"><Svg w={12} h={12}><path d="M0 6h12M6 0v12" /></Svg></IconButton>
    <IconButton $w={40} aria-label="全屏"><Svg w={12} h={12}><path d="M1 4V1h3M8 1h3v3M1 8v3h3M8 11h3V8" /></Svg></IconButton>
  </StatusBar>
);

const Arrow = ({ x1, y1, x2, y2 }: { x1: number; y1: number; x2: number; y2: number }) => {
  const len = Math.hypot(x2 - x1, y2 - y1);
  const angle = (Math.atan2(y2 - y1, x2 - x1) * 180) / Math.PI;
  return (
    <path
      transform={`translate(${x1} ${y1}) rotate(${angle})`}
      d={`M0 -1.500H${len - 20}L${len - 24} -6.500 ${len} 0 ${len - 24} 6.500 ${len - 20} 1.500H0z`}
      fill="#ff0000" stroke="#a03030" strokeWidth=".5"
    />
  );
};

export default function App() {
  return (
    <Shell>
      <Global />
      <Title />
      <Menu />
      <RibbonBar />
      <Workspace>
        <Outline />
        <Document />
        <Scroller />
        <Formats />
        <Rail />
      </Workspace>
      <Status />
      <Marks width="760" height="420" aria-hidden="true">
        <g style={{ filter: 'drop-shadow(3px 3px 2px rgba(0,0,0,.55))' }}>
          <Arrow x1={565} y1={137} x2={586} y2={39} />
          <Arrow x1={668} y1={385} x2={727} y2={291} />
        </g>
      </Marks>
      <Watermark>
        <svg width="42" height="42" viewBox="0 0 42 42" fill="none" aria-hidden="true">
          <path d="M36 2C20 0 2 12 1 24c0 6 5 8 9 7-3-7 6-20 26-29z" fill="#3f8fd0" opacity=".85" />
          <path d="M10 31c-3-6 2-13 9-15 5-1 8 2 7 6-1 3-4 5-7 4 3-1 4-5 1-6-4-1-8 5-6 10z" fill="#6fb4e4" opacity=".9" />
          <path d="M28 11c12 0 15 8 10 16-5 7-16 12-26 11 10-2 19-8 20-16 .5-5-1-8-4-11z" fill="#7cc576" opacity=".85" />
          <path d="M4 33c8 4 20 1 26-8-2 9-14 15-26 8z" fill="#e8c34a" opacity=".7" />
        </svg>
        <div>
          <WatermarkName>极光下载站</WatermarkName>
          <WatermarkSite>www.xz7.com</WatermarkSite>
        </div>
      </Watermark>
      <ImeBar>
        <span>CH</span>
        <Svg w={12} h={14}><path d="M6 1c4 3 5 6 2 9M6 1v9" /><circle cx="4" cy="10.500" r="2.200" /></Svg>
        <span>简</span>
      </ImeBar>
    </Shell>
  );
}
